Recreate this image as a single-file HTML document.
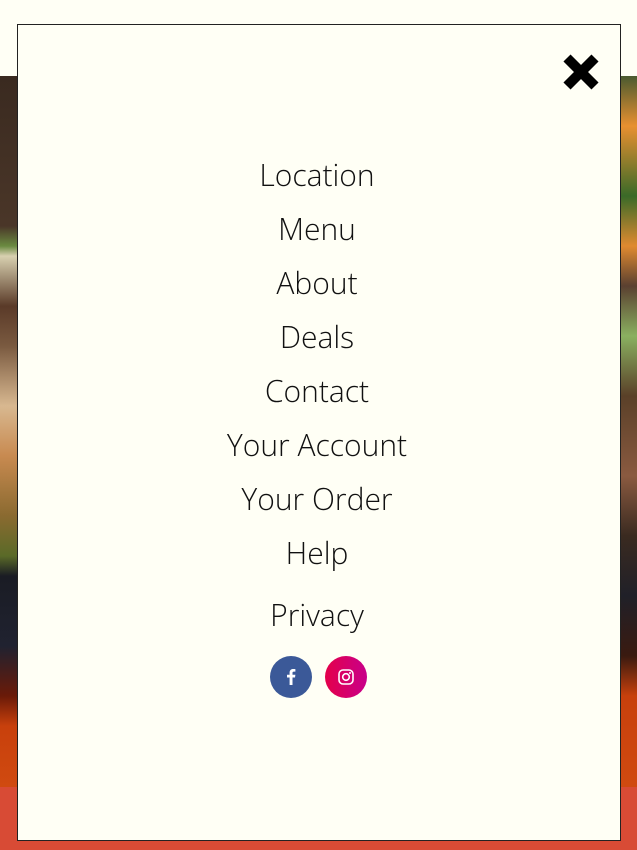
<!DOCTYPE html>
<html><head><meta charset="utf-8"><style>
html,body{margin:0;padding:0;width:637px;height:850px;overflow:hidden;background:#fffff5;font-family:"Open Sans","Liberation Sans",sans-serif;}
.l{position:absolute;left:0;top:76px;width:20px;height:711px;background:linear-gradient(#3a2a20 0,#4a3628 150px,#6a8a40 170px,#d8d0b0 180px,#5a3a28 230px,#7a5a40 270px,#d8b890 330px,#c88a50 380px,#8a6a30 440px,#5a6a28 480px,#1a1c24 500px,#202230 570px,#6a1a08 620px,#c8400c 650px,#d04a10 711px);}
.r{position:absolute;left:618px;top:76px;width:19px;height:711px;background:linear-gradient(#4a5a30 0,#e89030 50px,#3a6a28 120px,#e08a30 170px,#5a4030 210px,#8ab060 260px,#5a4028 320px,#8a5a40 400px,#3a2a20 460px,#202028 520px,#3a1a10 580px,#c8400c 620px,#d04a10 711px);}
.red{position:absolute;left:0;top:787px;width:637px;height:63px;background:#d84b35;}
.modal{position:absolute;left:17px;top:24px;width:602px;height:815px;background:#fffff5;border:1px solid #222;}
.close{position:absolute;left:543px;top:27px;}
ul{list-style:none;margin:0;padding:0;position:absolute;top:130px;left:-2px;width:100%;text-align:center;}
li{font-size:30px;font-weight:300;color:#111;height:54px;line-height:40px;}
li.p{margin-top:8px}
.soc{position:absolute;top:631px;left:252px;}
.c{position:absolute;width:42px;height:42px;border-radius:50%;top:0;}
</style></head><body>
<div class="l"></div><div class="r"></div><div class="red"></div>
<div class="modal">
<svg class="close" width="40" height="40" viewBox="0 0 40 40"><path d="M6 6L34 34M34 6L6 34" stroke="#000" stroke-width="10"/></svg>
<ul><li>Location</li><li>Menu</li><li>About</li><li>Deals</li><li>Contact</li><li>Your Account</li><li>Your Order</li><li>Help</li><li class="p">Privacy</li></ul>
<div class="soc">
<div class="c" style="left:0;background:#3b5998"><svg width="42" height="42" viewBox="0 0 42 42"><path d="M22.5 29V21.5h2.5l.4-2.8h-2.9v-1.8c0-.8.3-1.3 1.4-1.3h1.5v-2.5c-.3 0-1.2-.1-2.2-.1-2.2 0-3.6 1.3-3.6 3.7v2H17v2.8h2.6V29z" fill="#fff"/></svg></div>
<div class="c" style="left:55px;background:linear-gradient(90deg,#e4004a,#c8008a)"><svg width="42" height="42" viewBox="0 0 42 42"><rect x="14" y="14" width="14" height="14" rx="4" fill="none" stroke="#fff" stroke-width="1.6"/><circle cx="21" cy="21" r="3.3" fill="none" stroke="#fff" stroke-width="1.6"/><circle cx="25" cy="17" r="1" fill="#fff"/></svg></div>
</div>
</div>
</body></html>
